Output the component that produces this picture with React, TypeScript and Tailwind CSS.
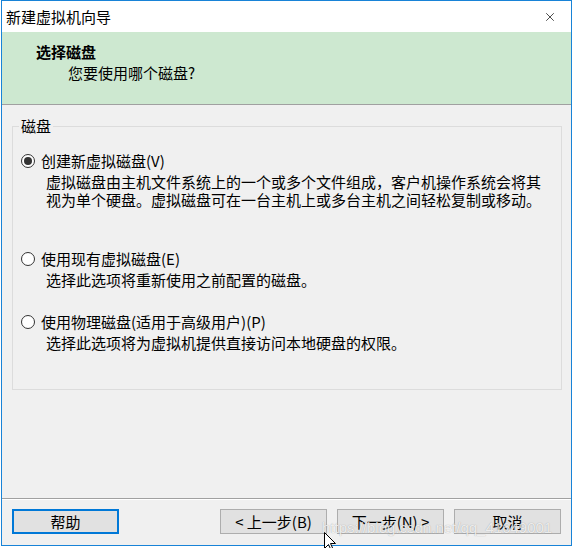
import { X } from "lucide-react";

const options = [
  {
    label: "创建新虚拟磁盘(V)",
    checked: true,
    lines: [
      "虚拟磁盘由主机文件系统上的一个或多个文件组成，客户机操作系统会将其",
      "视为单个硬盘。虚拟磁盘可在一台主机上或多台主机之间轻松复制或移动。",
    ],
    gap: "mt-[25px]",
  },
  {
    label: "使用现有虚拟磁盘(E)",
    checked: false,
    lines: ["选择此选项将重新使用之前配置的磁盘。"],
    gap: "mt-[41px]",
  },
  {
    label: "使用物理磁盘(适用于高级用户)(P)",
    checked: false,
    lines: ["选择此选项将为虚拟机提供直接访问本地硬盘的权限。"],
    gap: "mt-[24px]",
  },
];

const Radio = ({ checked }: { checked: boolean }) => (
  <span className="w-[14px] h-[14px] rounded-full border border-[#333] bg-white flex items-center justify-center shrink-0">
    {checked && <span className="w-[8px] h-[8px] rounded-full bg-[#333]" />}
  </span>
);

const App = () => {
  return (
    <div className="relative w-[574px] h-[548px] bg-white overflow-hidden font-['Noto_Sans_CJK_SC',sans-serif] text-[15px] text-black">
      <div className="ml-px w-[571px] h-[546px] border border-[#1883d7] bg-[#f0f0f0] flex flex-col">
        {/* Title bar */}
        <div className="h-[31px] bg-white flex items-center justify-between pl-[4px] pr-[14px]">
          <span className="leading-[18px]">新建虚拟机向导</span>
          <X className="w-[14px] h-[14px] text-black" strokeWidth={1.2} />
        </div>

        {/* Header */}
        <div className="h-[73px] bg-[#cde8d0] border-b border-[#a0a0a0] pl-[34px] pt-[9px]">
          <div className="h-[21px] leading-[21px] font-bold">选择磁盘</div>
          <div className="h-[21px] leading-[21px] ml-[32px]">您要使用哪个磁盘?</div>
        </div>

        {/* Body */}
        <div className="flex-1 px-[10px]">
          <div className="relative mt-[21px] w-[550px] h-[264px] border border-[#dcdcdc]">
            <span className="absolute -top-[10px] left-[6px] px-[2px] leading-[18px] bg-[#f0f0f0]">
              磁盘
            </span>
            {options.map((o) => (
              <div key={o.label} className={o.gap}>
                <div className="flex items-center h-[18px] pl-[8px]">
                  <Radio checked={o.checked} />
                  <span className="ml-[6px] leading-[18px]">{o.label}</span>
                </div>
                <div className="mt-[3px] pl-[33px]">
                  {o.lines.map((l) => (
                    <div key={l} className="leading-[18px] whitespace-nowrap">
                      {l}
                    </div>
                  ))}
                </div>
              </div>
            ))}
          </div>
        </div>

        {/* Footer */}
        <div className="border-t border-[#a0a0a0]">
          <div className="border-t border-white h-[46px] flex items-start pt-[9px] pl-[10px] pr-[10px]">
            <button className="w-[107px] h-[25px] border-2 border-[#0078d7] bg-[#e1e1e1] leading-[18px]">
              帮助
            </button>
            <div className="flex-1" />
            <div className="flex gap-[10px]">
              <button className="w-[107px] h-[25px] border border-[#adadad] bg-[#e1e1e1] leading-[18px]">
                &lt; 上一步(B)
              </button>
              <button className="w-[107px] h-[25px] border border-[#adadad] bg-[#e1e1e1] leading-[18px]">
                下一步(N) &gt;
              </button>
              <button className="w-[107px] h-[25px] border border-[#adadad] bg-[#e1e1e1] leading-[18px]">
                取消
              </button>
            </div>
          </div>
        </div>
      </div>

      {/* Watermark */}
      <span className="absolute left-[322px] top-[518px] font-['Liberation_Sans',sans-serif] text-[15px] leading-[20px] text-white/80 [text-shadow:0_0_1px_rgba(0,0,0,0.35)] whitespace-nowrap">
        https://blog.csdn.net/qq_41649001
      </span>

      {/* Mouse cursor */}
      <svg className="absolute left-[324px] top-[532px]" width="13" height="20" viewBox="0 0 13 20">
        <path d="M0.5 0.5 L0.5 16.5 L4.5 12.5 L7.5 19 L9.5 18 L6.5 11.5 L11.5 11.5 Z" fill="white" stroke="black" strokeWidth="1" />
      </svg>
    </div>
  );
};

export default App;
